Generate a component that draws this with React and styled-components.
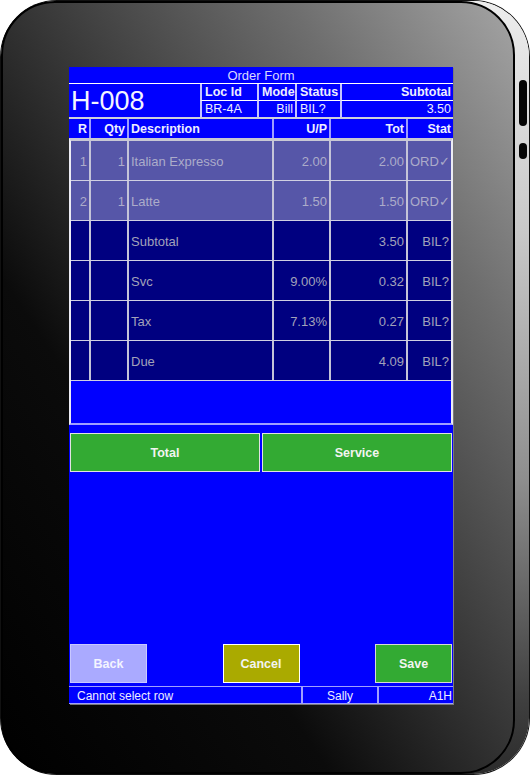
import React from 'react';
import styled, { createGlobalStyle } from 'styled-components';

const GlobalStyle = createGlobalStyle`
  html, body { margin: 0; padding: 0; background: #ffffff; }
  body { font-family: "Liberation Sans", Arial, sans-serif; }
  * { box-sizing: border-box; }
`;

const Page = styled.div`
  width: 530px;
  height: 775px;
  padding: 1px 0 0 1px;
  overflow: hidden;
`;

const Device = styled.div`
  position: relative;
  width: 528px;
  height: 773px;
  border-radius: 56px;
  background: linear-gradient(to bottom, #ededed 0%, #c8c8c8 30%, #8e8e8e 62%, #404040 90%, #2c2c2c 100%);
  box-shadow: 0 0 0 1px #111;
`;

const SideKey = styled.div`
  position: absolute;
  right: 2px;
  top: ${(p) => p.$top}px;
  width: 8px;
  height: ${(p) => p.$h}px;
  border-radius: 4px;
  background: #050505;
`;

const Face = styled.div`
  width: 514px;
  height: 773px;
  border: 2px solid #000;
  border-radius: 54px;
  background: linear-gradient(to bottom left, #a4a4a4 0%, #6e6e6e 22%, #363636 48%, #0b0b0b 68%, #000 100%);
  padding: 64px 0 0 66px;
`;

const Screen = styled.div`
  width: 384px;
  height: 637px;
  background: #0000ff;
  display: flex;
  flex-direction: column;
  box-shadow: 1px 1px 0 #7a7a7a;
  color: #eeeeff;
  font-family: "Liberation Sans", Arial, sans-serif;
`;

const TitleBar = styled.div`
  height: 17px;
  border-bottom: 1px solid #ffffff;
  text-align: center;
  font-size: 13px;
  line-height: 16px;
  padding-top: 1px;
  color: #d8d8ff;
`;

const Header = styled.div`
  display: grid;
  grid-template-columns: 131px 57px 38px 45px 113px;
  grid-template-rows: 17px 16px;
  height: 35px;
  border-bottom: 2px solid #cfd0dc;
`;

const BigId = styled.div`
  grid-row: 1 / 3;
  display: flex;
  align-items: center;
  padding: 1px 0 0 2px;
  font-size: 27px;
  color: #f4f4ff;
`;

const HeadCell = styled.div`
  border-left: 2px solid #c4c4ff;
  border-bottom: ${(p) => (p.$top ? '1px solid #ffffff' : 'none')};
  padding: 1px 2px 0 3px;
  font-size: 12.5px;
  font-weight: ${(p) => (p.$bold ? 'bold' : 'normal')};
  text-align: ${(p) => p.$align || 'left'};
  line-height: 15px;
  white-space: nowrap;
  overflow: hidden;
`;

const ColHeader = styled.div`
  display: grid;
  grid-template-columns: 20px 38px 145px 57px 77px 47px;
  height: 19px;
`;

const ColCell = styled.div`
  border-left: ${(p) => (p.$first ? 'none' : '2px solid #9c9cff')};
  padding: 1px 2px 0 2px;
  font-size: 12.5px;
  font-weight: bold;
  line-height: 18px;
  text-align: ${(p) => p.$align || 'right'};
  white-space: nowrap;
  overflow: hidden;
`;

const Table = styled.div`
  height: 287px;
  border-top: 3px solid #c8c8d4;
  border-left: 2px solid #ececf4;
  border-right: 2px solid #ececf4;
  border-bottom: 2px solid #a0a0ff;
  display: flex;
  flex-direction: column;
`;

const Row = styled.div`
  display: grid;
  grid-template-columns: 18px 38px 145px 57px 77px 45px;
  height: 40px;
  background: ${(p) => (p.$sel ? '#5656a8' : '#000080')};
  border-bottom: 1px solid #d0d0e2;
  color: ${(p) => (p.$sel ? '#acacca' : '#a2a2ba')};
`;

const Cell = styled.div`
  border-left: ${(p) => (p.$first ? 'none' : '2px solid #c4c4d8')};
  display: flex;
  align-items: center;
  justify-content: ${(p) => (p.$align === 'left' ? 'flex-start' : 'flex-end')};
  padding: 1px 2px 0 2px;
  font-size: 13px;
  white-space: nowrap;
  overflow: hidden;
`;

const Gap = styled.div`
  height: ${(p) => p.$h}px;
  flex: none;
`;

const Spacer = styled.div`
  flex: 1;
`;

const ButtonRow = styled.div`
  display: flex;
  gap: 2px;
  padding: 0 1px;
  height: 39px;
`;

const BottomRow = styled.div`
  display: flex;
  justify-content: space-between;
  padding: 0 1px;
  height: 39px;
`;

const Btn = styled.button`
  flex: ${(p) => (p.$grow ? 1 : 'none')};
  width: ${(p) => (p.$grow ? 'auto' : '77px')};
  height: 39px;
  background: ${(p) => p.$bg};
  border: 1px solid ${(p) => p.$edge};
  color: ${(p) => p.$fg || '#f2f4f0'};
  font-family: "Liberation Sans", Arial, sans-serif;
  font-size: 12.5px;
  font-weight: bold;
  padding: 0;
  margin: 0;
  cursor: pointer;
`;

const StatusBar = styled.div`
  display: grid;
  grid-template-columns: 232px 76px 76px;
  height: 18px;
  border-top: 1px solid #a0a0ff;
  border-bottom: 1px solid #a0a0ff;
  font-size: 12px;
  line-height: 16px;
  color: #eeeeff;
`;

const StatusCell = styled.div`
  border-left: ${(p) => (p.$first ? 'none' : '2px solid #a0a0ff')};
  padding: ${(p) => p.$pad || '1px 1px 0'};
  text-align: ${(p) => p.$align || 'left'};
  white-space: nowrap;
  overflow: hidden;
`;

const rows = [
  { sel: true, r: '1', q: '1', d: 'Italian Expresso', up: '2.00', t: '2.00', s: 'ORD✓', sa: 'left' },
  { sel: true, r: '2', q: '1', d: 'Latte', up: '1.50', t: '1.50', s: 'ORD✓', sa: 'left' },
  { r: '', q: '', d: 'Subtotal', up: '', t: '3.50', s: 'BIL?' },
  { r: '', q: '', d: 'Svc', up: '9.00%', t: '0.32', s: 'BIL?' },
  { r: '', q: '', d: 'Tax', up: '7.13%', t: '0.27', s: 'BIL?' },
  { r: '', q: '', d: 'Due', up: '', t: '4.09', s: 'BIL?' },
];

export default function App() {
  return (
    <Page>
      <GlobalStyle />
      <Device>
        <SideKey $top={79} $h={46} />
        <SideKey $top={142} $h={16} />
        <Face>
          <Screen>
            <TitleBar>Order Form</TitleBar>
            <Header>
              <BigId>H-008</BigId>
              <HeadCell $top $bold>Loc Id</HeadCell>
              <HeadCell $top $bold $align="right">Mode</HeadCell>
              <HeadCell $top $bold>Status</HeadCell>
              <HeadCell $top $bold $align="right">Subtotal</HeadCell>
              <HeadCell>BR-4A</HeadCell>
              <HeadCell $align="right">Bill</HeadCell>
              <HeadCell>BIL?</HeadCell>
              <HeadCell $align="right">3.50</HeadCell>
            </Header>
            <ColHeader>
              <ColCell $first>R</ColCell>
              <ColCell>Qty</ColCell>
              <ColCell $align="left">Description</ColCell>
              <ColCell>U/P</ColCell>
              <ColCell>Tot</ColCell>
              <ColCell>Stat</ColCell>
            </ColHeader>
            <Table>
              {rows.map((row, i) => (
                <Row key={i} $sel={row.sel}>
                  <Cell $first>{row.r}</Cell>
                  <Cell>{row.q}</Cell>
                  <Cell $align="left">{row.d}</Cell>
                  <Cell>{row.up}</Cell>
                  <Cell>{row.t}</Cell>
                  <Cell $align={row.sa}>{row.s}</Cell>
                </Row>
              ))}
            </Table>
            <Gap $h={8} />
            <ButtonRow>
              <Btn $grow $bg="#33aa33" $edge="#e2e2e2">Total</Btn>
              <Btn $grow $bg="#33aa33" $edge="#e2e2e2">Service</Btn>
            </ButtonRow>
            <Spacer />
            <BottomRow>
              <Btn $bg="#aaaaff" $edge="#c8c8ff" $fg="#f4f4ff">Back</Btn>
              <Btn $bg="#aaaa00" $edge="#ffffff">Cancel</Btn>
              <Btn $bg="#33aa33" $edge="#d8d8d8">Save</Btn>
            </BottomRow>
            <Gap $h={3} />
            <StatusBar>
              <StatusCell $first $pad="1px 0 0 8px">Cannot select row</StatusCell>
              <StatusCell $align="center">Sally</StatusCell>
              <StatusCell $align="right" $pad="1px 1px 0 0">A1H</StatusCell>
            </StatusBar>
          </Screen>
        </Face>
      </Device>
    </Page>
  );
}
